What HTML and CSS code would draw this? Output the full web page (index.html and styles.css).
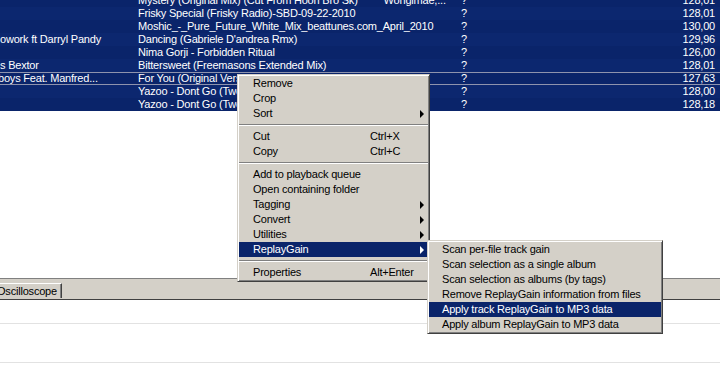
FILE: index.html
```html
<!DOCTYPE html>
<html lang="en">
<head>
    <meta charset="UTF-8">
    <meta name="viewport" content="width=device-width, initial-scale=1.0">
    <title>Playlist - ReplayGain</title>
    <link rel="stylesheet" href="styles.css">
</head>
<body>
    <div class="playlist">
        <div class="row"><span class="artist"></span><span class="title">Mystery (Original Mix) (Cut From Hoon Bro Sk)<span class="album">Wongimae,...</span></span><span class="status">?</span><span class="bpm">128,01</span></div>
        <div class="row alt"><span class="artist"></span><span class="title">Frisky Special (Frisky Radio)-SBD-09-22-2010</span><span class="status">?</span><span class="bpm">128,01</span></div>
        <div class="row"><span class="artist"></span><span class="title">Moshic_-_Pure_Future_White_Mix_beattunes.com_April_2010</span><span class="status">?</span><span class="bpm">130,00</span></div>
        <div class="row alt"><span class="artist">owork ft Darryl Pandy</span><span class="title">Dancing (Gabriele D'andrea Rmx)</span><span class="status">?</span><span class="bpm">129,96</span></div>
        <div class="row"><span class="artist"></span><span class="title">Nima Gorji - Forbidden Ritual</span><span class="status">?</span><span class="bpm">126,00</span></div>
        <div class="row alt"><span class="artist">s Bextor</span><span class="title">Bittersweet (Freemasons Extended Mix)</span><span class="status">?</span><span class="bpm">128,01</span></div>
        <div class="row focus"><span class="artist clip">boys Feat. Manfred...</span><span class="title">For You (Original Version)</span><span class="status">?</span><span class="bpm">127,63</span></div>
        <div class="row alt"><span class="artist"></span><span class="title">Yazoo - Dont Go (Two Ray Remix)</span><span class="status">?</span><span class="bpm">128,00</span></div>
        <div class="row"><span class="artist"></span><span class="title">Yazoo - Dont Go (Two Ray Remix)</span><span class="status">?</span><span class="bpm">128,18</span></div>
    </div>

    <div class="blank"></div>

    <div class="tabs">
        <span class="tab">Oscilloscope</span>
    </div>

    <div class="panel">
        <div class="panel-row"></div>
        <div class="panel-row tall"></div>
    </div>

    <!-- context menu over the playlist -->
    <div class="menu context">
        <div class="item"><span class="label">Remove</span></div>
        <div class="item"><span class="label">Crop</span></div>
        <div class="item"><span class="label">Sort</span><span class="arrow"></span></div>
        <div class="sep"></div>
        <div class="item"><span class="label">Cut</span><span class="key">Ctrl+X</span></div>
        <div class="item"><span class="label">Copy</span><span class="key">Ctrl+C</span></div>
        <div class="sep"></div>
        <div class="item"><span class="label">Add to playback queue</span></div>
        <div class="item"><span class="label">Open containing folder</span></div>
        <div class="item"><span class="label">Tagging</span><span class="arrow"></span></div>
        <div class="item"><span class="label">Convert</span><span class="arrow"></span></div>
        <div class="item"><span class="label">Utilities</span><span class="arrow"></span></div>
        <div class="item active"><span class="label">ReplayGain</span><span class="arrow"></span></div>
        <div class="sep"></div>
        <div class="item"><span class="label">Properties</span><span class="key">Alt+Enter</span></div>
    </div>

    <div class="menu sub">
        <div class="item"><span class="label">Scan per-file track gain</span></div>
        <div class="item"><span class="label">Scan selection as a single album</span></div>
        <div class="item"><span class="label">Scan selection as albums (by tags)</span></div>
        <div class="item"><span class="label">Remove ReplayGain information from files</span></div>
        <div class="item active"><span class="label">Apply track ReplayGain to MP3 data</span></div>
        <div class="item"><span class="label">Apply album ReplayGain to MP3 data</span></div>
    </div>
</body>
</html>
```

FILE: styles.css
```css
body {
    margin: 0;
    background-color: #fff;
    font-family: "Liberation Sans", Arial, sans-serif;
    font-size: 11px;
    letter-spacing: -0.2px;
    overflow: hidden;
    height: 367px;
}

/* playlist */
.playlist {
    margin-top: -6px;
    background-color: #0a246a;
    color: #fff;
}
.row {
    display: grid;
    grid-template-columns: 138px 320px 1fr 100px;
    height: 13px;
    line-height: 13px;
    white-space: nowrap;
    overflow: hidden;
}
.row.alt {
    background-color: #0c276f;
}
.row.focus {
    box-shadow: inset 0 1px #8e93ad, inset 0 -1px #8e93ad;
}
.row span {
    overflow: hidden;
}
.artist.clip {
    margin-left: -2px;
}
.album {
    margin-left: 26px;
}
.status {
    padding-left: 3px;
}
.bpm {
    text-align: right;
    padding-right: 5px;
}

.blank {
    height: 167px;
}

/* tab strip */
.tabs {
    height: 20px;
    padding-top: 4px;
    box-sizing: border-box;
    background-color: #d4d0c8;
    border-top: 1px solid #808080;
    border-bottom: 1px solid #404040;
    height: 22px;
}
.tab {
    display: inline-block;
    height: 15px;
    line-height: 15px;
    margin-left: -3px;
    padding-right: 4px;
    border-top: 1px solid #fff;
    border-right: 1px solid #404040;
    box-shadow: inset -1px 0 #808080;
    box-sizing: border-box;
    color: #000;
}

.panel-row {
    height: 23px;
    border-bottom: 1px solid #e2e2e2;
}
.panel-row.tall {
    height: 38px;
}

/* popup menus */
.menu {
    position: absolute;
    box-sizing: border-box;
    padding: 1px;
    background-color: #d4d0c8;
    border: 1px solid;
    border-color: #d4d0c8 #404040 #404040 #d4d0c8;
    box-shadow: inset 1px 1px #fff, inset -1px -1px #808080;
    color: #000;
}
.menu.context {
    left: 237px;
    top: 74px;
    width: 193px;
}
.menu.sub {
    left: 427px;
    top: 240px;
    width: 236px;
}
.item {
    display: flex;
    align-items: center;
    height: 15px;
    line-height: 15px;
    white-space: nowrap;
    padding-right: 4px;
}
.context .label {
    width: 117px;
    padding-left: 14px;
}
.sub .label {
    padding-left: 13px;
}
.item.active {
    background-color: #0a246a;
    color: #fff;
}
.arrow {
    margin-left: auto;
    width: 0;
    height: 0;
    border-left: 4px solid #000;
    border-top: 4px solid transparent;
    border-bottom: 4px solid transparent;
}
.item.active .arrow {
    border-left-color: #fff;
}
.sep {
    height: 1px;
    margin: 3px 0;
    background-color: #808080;
    border-bottom: 1px solid #fff;
}
```
